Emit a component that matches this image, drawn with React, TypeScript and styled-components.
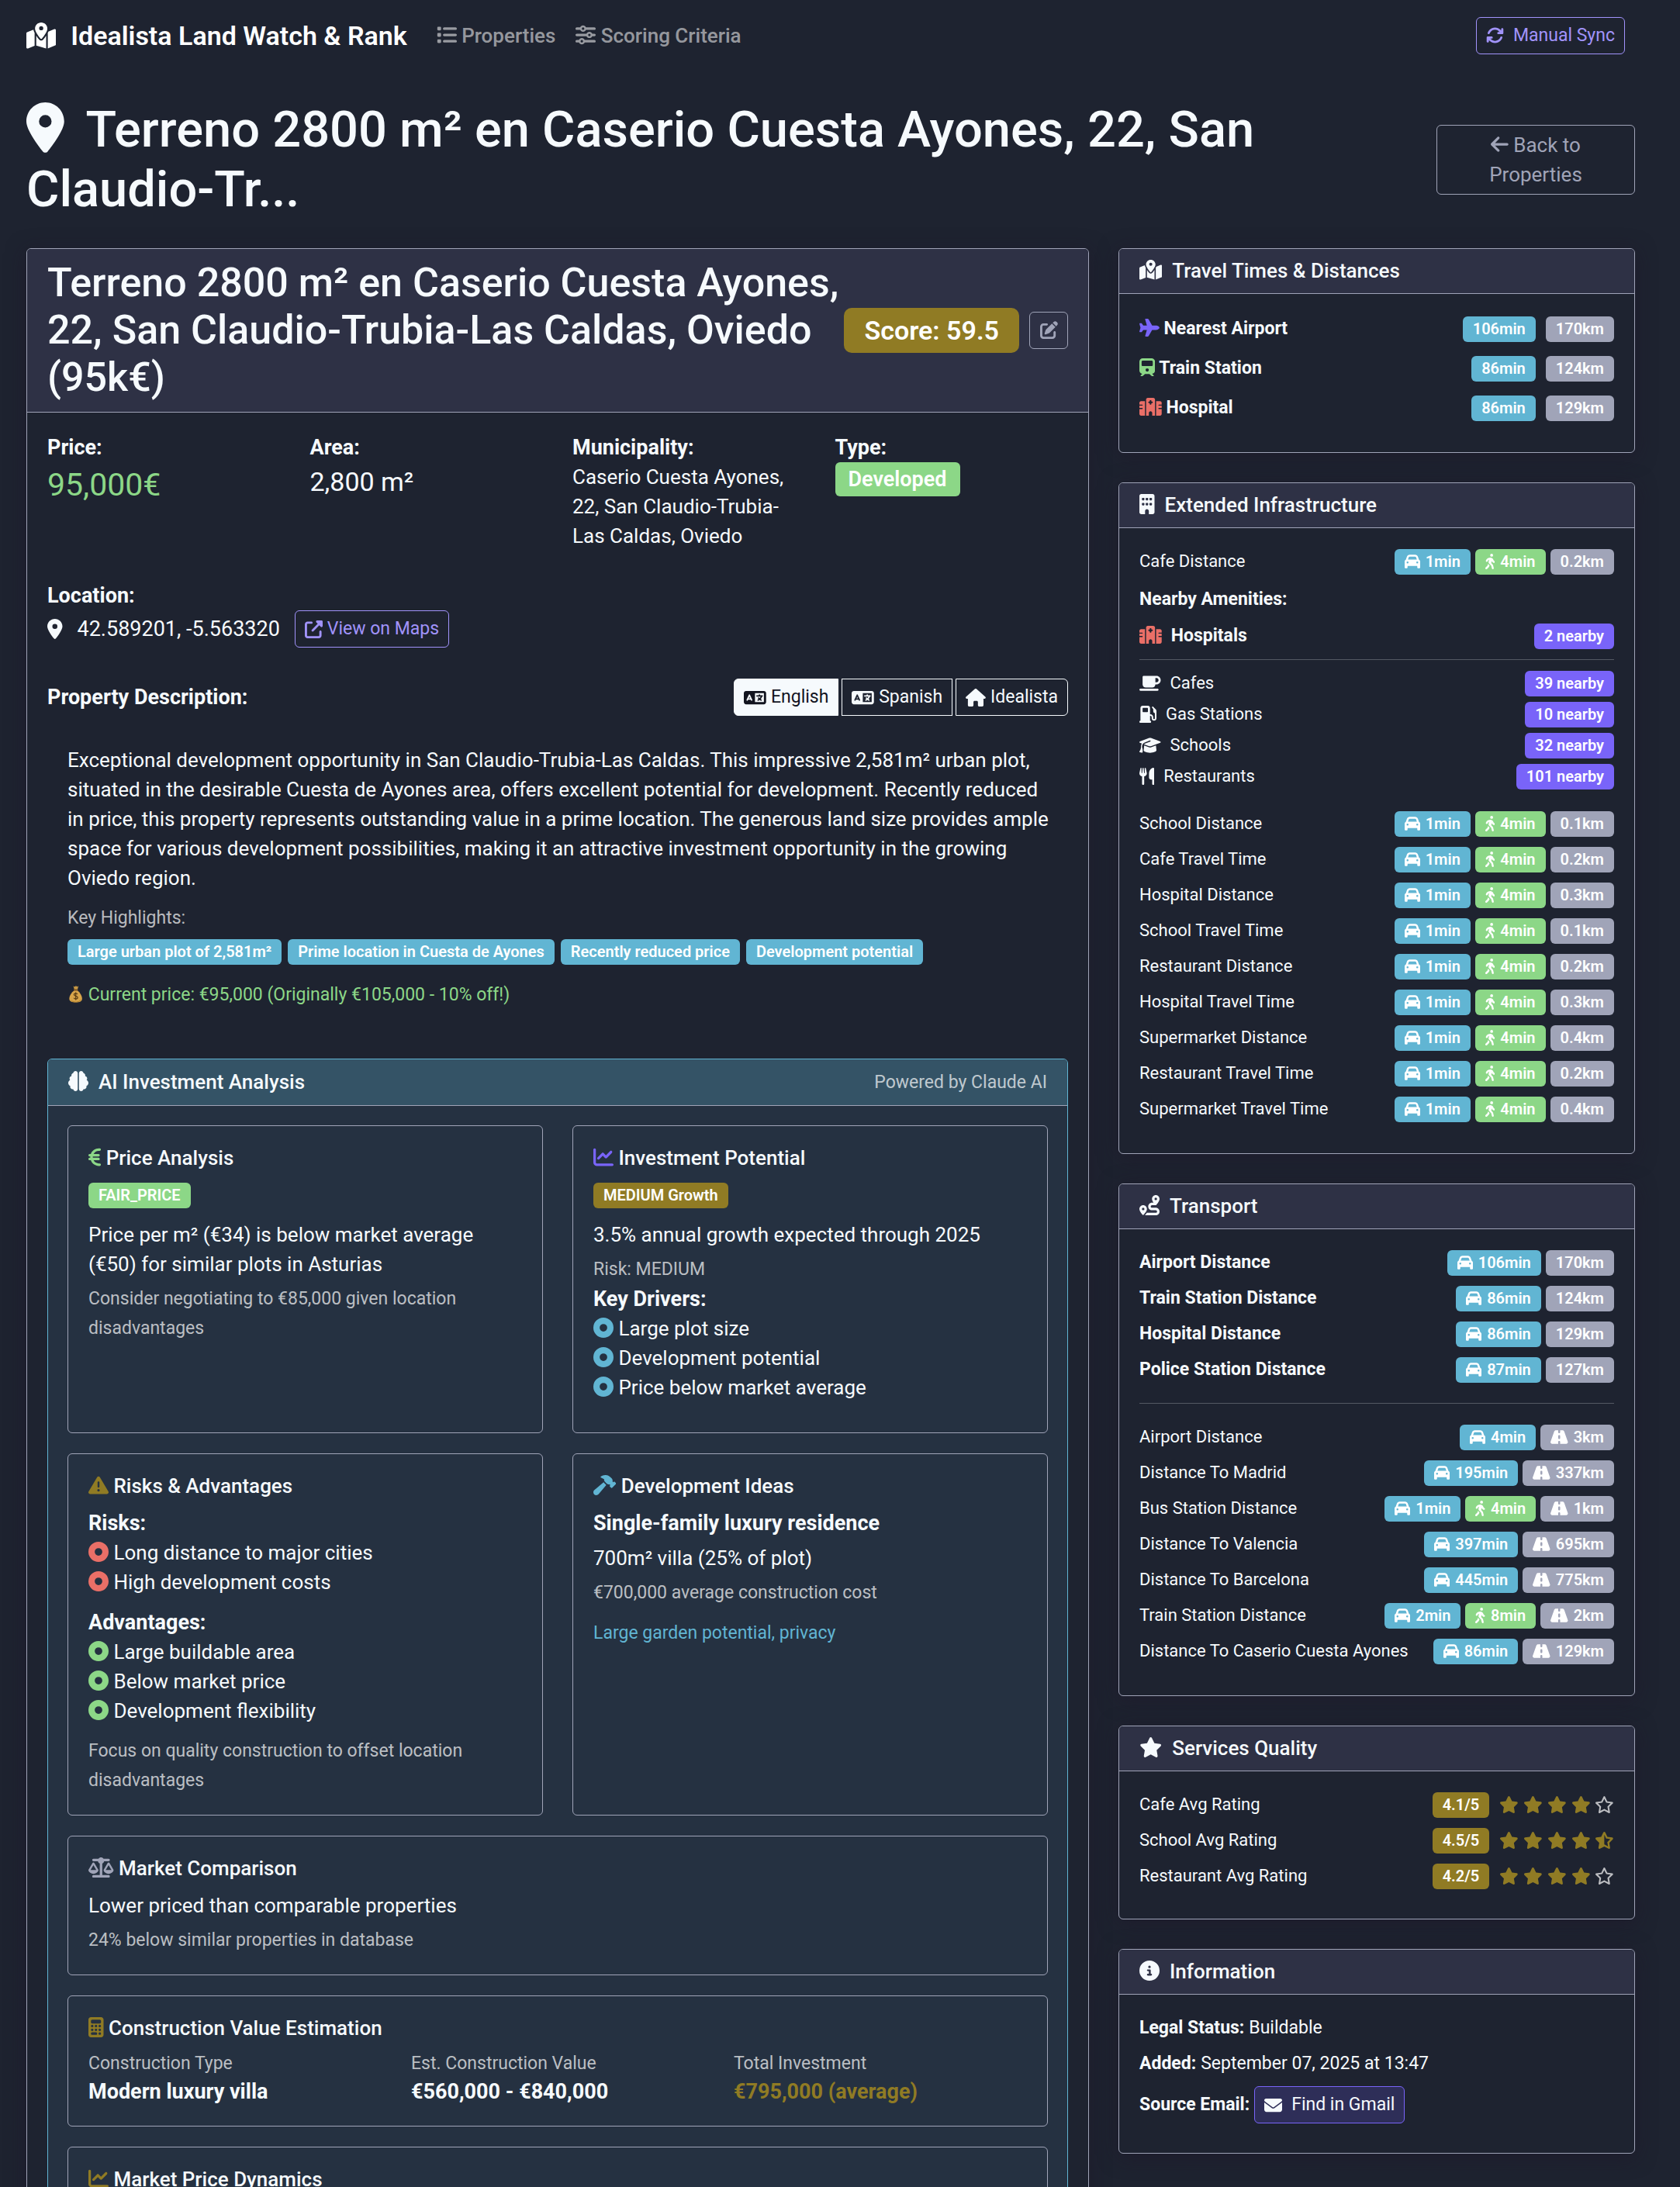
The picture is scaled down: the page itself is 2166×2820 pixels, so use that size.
import React from "react";
import styled, { createGlobalStyle, css } from "styled-components";
import type { IconType } from "react-icons";
import {
  FaArrowLeft,
  FaArrowsRotate,
  FaBrain,
  FaBuilding,
  FaCalculator,
  FaCar,
  FaChartLine,
  FaCircleDot,
  FaCircleInfo,
  FaEnvelope,
  FaEuroSign,
  FaGasPump,
  FaGraduationCap,
  FaHammer,
  FaHospital,
  FaHouse,
  FaLanguage,
  FaList,
  FaLocationDot,
  FaMapLocationDot,
  FaMugSaucer,
  FaPenToSquare,
  FaPersonWalking,
  FaPlane,
  FaRegStar,
  FaRoad,
  FaRoute,
  FaScaleBalanced,
  FaSliders,
  FaStar,
  FaStarHalfStroke,
  FaTrain,
  FaTriangleExclamation,
  FaUpRightFromSquare,
  FaUtensils,
} from "react-icons/fa6";

const color = {
  page: "#1e2330",
  header: "#2e3145",
  line: "#a0a4b8",
  text: "#f6fafd",
  muted: "rgba(255, 255, 255, 0.7)",
  info: "#61b5d3",
  green: "#8cd787",
  grey: "#a0a4b8",
  purple: "#7964f9",
  lilac: "#a193fb",
  gold: "#907b24",
  red: "#ea6f67",
};

const GlobalStyle = createGlobalStyle`
  *, *::before, *::after { box-sizing: border-box; }
  body {
    margin: 0;
    background: ${color.page};
    color: ${color.text};
    font-family: Roboto, "Liberation Sans", sans-serif;
    font-size: 26px;
    line-height: 38px;
  }
  h1, h2, h3, h4, p, ul, dl, dd, dt { margin: 0; padding: 0; }
  ul { list-style: none; }
  svg { height: 1em; vertical-align: -0.125em; flex: none; }
`;

/* Draws a Font Awesome glyph one em high and as wide as its own view box asks. */
const Icon = ({ glyph: Glyph, empty }: { glyph: IconType; empty?: boolean }) => {
  const element = Glyph({}) as React.ReactElement<{ attr?: { viewBox?: string } }>;
  const box = (element.props.attr?.viewBox ?? "0 0 512 512").split(" ").map(Number);
  return <Glyph style={{ width: `${box[2] / box[3]}em` }} data-empty={empty ? "" : undefined} />;
};

const Viewport = styled.div`
  height: 100vh;
  overflow-y: auto;
  scrollbar-width: none;
`;

const Page = styled.div`
  padding: 0 58px 38px 34px;
`;

/* ---------- navigation ---------- */

const Navbar = styled.nav`
  display: flex;
  align-items: center;
  height: 91px;
  padding-right: 13px;
`;

const Brand = styled.a`
  display: flex;
  align-items: center;
  gap: 19px;
  margin-right: 38px;
  color: #fff;
  font-size: 34px;
  font-weight: 600;
  text-decoration: none;
`;

const NavLinks = styled.div`
  display: flex;
  flex: 1;
  gap: 26px;
`;

const NavLink = styled.a`
  color: rgba(255, 255, 255, 0.55);
  font-weight: 500;
  text-decoration: none;
`;

const buttonBase = css`
  display: inline-flex;
  align-items: center;
  justify-content: center;
  height: 48px;
  padding: 0 12px;
  border: 1px solid currentColor;
  border-radius: 6px;
  background: transparent;
  font: inherit;
  font-size: 23px;
  text-decoration: none;
  white-space: nowrap;
`;

const SyncButton = styled.button`
  ${buttonBase}
  gap: 12px;
  color: ${color.lilac};
`;

/* ---------- title row ---------- */

const TitleRow = styled.header`
  display: flex;
  align-items: center;
  justify-content: space-between;
  gap: 38px;
  padding: 38px 0 37px;
`;

const PageTitle = styled.h1`
  flex: 1;
  font-size: 65px;
  font-weight: 500;
  line-height: 77px;

  svg { margin-right: 13px; }
`;

const BackLink = styled.a`
  width: 256px;
  padding: 6px 38px;
  border: 1px solid ${color.line};
  border-radius: 6px;
  color: ${color.grey};
  text-align: center;
  text-decoration: none;
`;

/* ---------- cards ---------- */

const Columns = styled.main`
  display: grid;
  grid-template-columns: repeat(12, minmax(0, 1fr));
  gap: 38px;
  align-items: start;
`;

const MainColumn = styled.div`
  grid-column: span 8;
`;

const SideColumn = styled.div`
  grid-column: span 4;
  display: flex;
  flex-direction: column;
  gap: 38px;
`;

const Card = styled.section`
  border: 1px solid ${color.line};
  border-radius: 6px;
  box-shadow: 0 4px 26px rgba(30, 20, 40, 0.5);
  overflow: hidden;
`;

const CardHeader = styled.div`
  display: flex;
  align-items: center;
  padding: 13px 26px;
  border-bottom: 1px solid ${color.line};
  background: ${color.header};
`;

const PropertyHeader = styled(CardHeader)`
  gap: 6px;
  padding: 13px 26px 14px;
`;

const HeaderActions = styled.div`
  display: flex;
  align-items: center;
  gap: 13px;
`;

const CardTitle = styled.h3`
  font-size: 26px;
  font-weight: 500;
  line-height: 31px;

  svg { margin-right: 13px; }
`;

const CardBody = styled.div<{ $end?: number }>`
  padding: 26px 26px ${(p) => p.$end ?? 38}px;
`;

const PropertyTitle = styled.h2`
  flex: 1;
  font-size: 52px;
  font-weight: 500;
  line-height: 61px;
`;

const ScoreBadge = styled.span`
  padding: 10px 26px;
  border-radius: 10px;
  background: ${color.gold};
  color: #fff;
  font-size: 34px;
  font-weight: 600;
  white-space: nowrap;
`;

const EditButton = styled.button`
  ${buttonBase}
  width: 50px;
  padding: 0;
  color: ${color.grey};
`;

type Tone = "info" | "green" | "grey" | "purple" | "gold";

const Badge = styled.span<{ $tone: Tone }>`
  display: inline-flex;
  align-items: center;
  gap: 7px;
  height: 33px;
  padding: 0 13px;
  border-radius: 6px;
  background: ${(p) => color[p.$tone]};
  color: #fff;
  font-size: 20px;
  font-weight: 600;
  line-height: 33px;
  white-space: nowrap;
`;

const TypeBadge = styled.span`
  align-self: flex-start;
  padding: 3px 17px;
  border-radius: 6px;
  background: ${color.green};
  color: #fff;
  font-size: 27px;
  font-weight: 600;
`;

/* ---------- property facts ---------- */

const Facts = styled.dl`
  display: grid;
  grid-template-columns: repeat(4, minmax(0, 1fr));
  gap: 38px;
`;

const Fact = styled.div`
  display: flex;
  flex-direction: column;
`;

const Label = styled.dt`
  font-size: 27px;
  font-weight: 700;
`;

const Price = styled.dd`
  color: ${color.green};
  font-size: 41px;
  line-height: 58px;
`;

const Area = styled.dd`
  font-size: 34px;
  line-height: 50px;
`;

const Location = styled.div`
  margin-top: 39px;
`;

const LocationLine = styled.div`
  display: flex;
  align-items: center;
  gap: 19px;
  height: 48px;
`;

const Coordinates = styled.span`
  font-size: 27px;
`;

const MapsLink = styled.a`
  ${buttonBase}
  gap: 6px;
  color: ${color.lilac};
`;

const DescriptionBar = styled.div`
  display: flex;
  align-items: center;
  justify-content: space-between;
  margin-top: 40px;
`;

const Strong = styled.strong`
  display: block;
  font-size: 27px;
  font-weight: 700;
`;

const ButtonGroup = styled.div`
  display: flex;
  gap: 4px;
`;

const LangButton = styled.button<{ $active?: boolean }>`
  ${buttonBase}
  gap: 6px;
  border-color: ${color.text};
  border-radius: 0;
  background: ${(p) => (p.$active ? color.text : "transparent")};
  color: ${(p) => (p.$active ? "#12141f" : color.text)};

  &:first-child { border-radius: 6px 0 0 6px; }
  &:last-child { border-radius: 0 6px 6px 0; }
`;

const Description = styled.div`
  padding: 38px 13px 0 26px;
`;

const Small = styled.p<{ $tone?: "green" | "info" }>`
  color: ${(p) => (p.$tone ? color[p.$tone] : color.muted)};
  font-size: 23px;
`;

const BadgeRow = styled.div<{ $gap?: number }>`
  display: flex;
  align-items: center;
  gap: ${(p) => p.$gap ?? 6}px;
`;

const Highlights = styled.div`
  padding-top: 14px;
`;

const HighlightBadges = styled(BadgeRow)`
  margin: 8px 0 20px;
`;

/* ---------- AI analysis ---------- */

const AiCard = styled.section`
  margin-top: 63px;
  border: 1px solid ${color.info};
  border-radius: 6px;
  background: #253141;
  overflow: hidden;
`;

const AiHeader = styled(CardHeader)`
  justify-content: space-between;
  height: 60px;
  background: #345366;
`;

const AiGrid = styled.div`
  display: grid;
  grid-template-columns: repeat(2, minmax(0, 1fr));
  gap: 26px 38px;
  padding: 25px;
`;

const Panel = styled.article<{ $wide?: boolean }>`
  grid-column: ${(p) => (p.$wide ? "1 / -1" : "auto")};
  padding: 26px 26px 25px;
  border: 1px solid ${color.line};
  border-radius: 6px;
`;

const PanelTitle = styled.h4`
  margin-bottom: 13px;
  font-size: 26px;
  font-weight: 500;
  line-height: 31px;
`;

const Stack = styled.div<{ $gap?: number; $end?: number }>`
  display: flex;
  flex-direction: column;
  gap: ${(p) => p.$gap ?? 7}px;
  padding-bottom: ${(p) => p.$end ?? 0}px;
`;

const BadgeLine = styled.div`
  display: flex;
  align-items: center;
  height: 38px;
  margin-bottom: 6px;
`;

const Tint = styled.span<{ $tone: keyof typeof color }>`
  color: ${(p) => color[p.$tone]};
`;

const Values = styled.dl`
  display: grid;
  grid-template-columns: repeat(3, minmax(0, 1fr));
  gap: 38px;
`;

const ValueLabel = styled.dt`
  color: ${color.muted};
  font-size: 23px;
  line-height: 34px;
`;

const Value = styled.dd<{ $gold?: boolean }>`
  color: ${(p) => (p.$gold ? color.gold : color.text)};
  font-size: 27px;
  font-weight: 700;
`;

/* ---------- sidebar rows ---------- */

const Rows = styled.ul<{ $gap?: number }>`
  display: flex;
  flex-direction: column;
  gap: ${(p) => p.$gap ?? 12}px;
`;

const Row = styled.li<{ $bold?: boolean; $tall?: boolean }>`
  display: flex;
  align-items: center;
  justify-content: space-between;
  height: ${(p) => (p.$tall ? 38 : 34)}px;
  font-size: ${(p) => (p.$bold ? 23 : 22)}px;
  font-weight: ${(p) => (p.$bold ? 700 : 400)};
`;

const AmenityName = styled.span`
  display: flex;
  align-items: center;
  gap: 12px;
`;

const Divider = styled.hr<{ $space: number }>`
  height: 1px;
  margin: ${(p) => p.$space}px 0;
  border: 0;
  background: rgba(246, 250, 253, 0.25);
`;

const Amenities = styled.div`
  padding: 13px 0 27px;
`;

const AmenitiesTitle = styled.h4`
  margin-bottom: 11px;
  font-size: 23px;
  font-weight: 700;
  line-height: 38px;
`;

const Rating = styled.div`
  display: flex;
  align-items: center;
  gap: 13px;
`;

const Stars = styled.span`
  display: flex;
  gap: 6px;
  color: ${color.gold};

  svg[data-empty] { color: ${color.muted}; }
`;

const InfoLine = styled.p`
  display: flex;
  align-items: center;
  gap: 6px;
  font-size: 23px;
  line-height: 34px;
`;

const GmailLink = styled.a`
  ${buttonBase}
  gap: 12px;
  border-color: ${color.purple};
  background: #2e2e58;
  color: ${color.text};
`;

const MoneyBag = () => (
  <svg viewBox="0 0 20 24" width="21" aria-label="money bag" role="img">
    <path d="M7 1.5 9 2.5 10.5 1l1.5 1.5L13.8 1.4 12.6 6H8.2z" fill="#c99a45" />
    <path d="M8 7.5C4.5 10 1.5 14.5 1.5 18.5c0 3.6 3.5 5 8.7 5s8.5-1.4 8.5-5c0-4-3-8.5-6.2-11z" fill="#d8a54a" />
    <path d="M4 20c1.2 2 4 2.6 6.2 2.6S16 22 17 19c.4 3-3 4.200-6.800 4.200S4.500 22.500 4 20z" fill="#a87626" />
    <path d="M7.500 5.800h5.400v1.900H7.500z" fill="#8b5d22" />
    <path d="M12.600 12.600c-.5-1-1.400-1.300-2.400-1.300-1.300 0-2.300.7-2.300 1.800 0 2.600 4.900 1.300 4.900 3.900 0 1.200-1.100 1.900-2.500 1.900-1.300 0-2.200-.5-2.600-1.500M10.200 9.800v10.600" fill="none" stroke="#5a3c14" strokeWidth="1.300" />
  </svg>
);

/* ---------- data ---------- */

type Trip = { name: string; drive: string; walk?: string; km: string };

const nearby: Trip[] = [
  ["School Distance", "0.1km"],
  ["Cafe Travel Time", "0.2km"],
  ["Hospital Distance", "0.3km"],
  ["School Travel Time", "0.1km"],
  ["Restaurant Distance", "0.2km"],
  ["Hospital Travel Time", "0.3km"],
  ["Supermarket Distance", "0.4km"],
  ["Restaurant Travel Time", "0.2km"],
  ["Supermarket Travel Time", "0.4km"],
].map(([name, km]) => ({ name, drive: "1min", walk: "4min", km }));

const mainTransport: Trip[] = [
  { name: "Airport Distance", drive: "106min", km: "170km" },
  { name: "Train Station Distance", drive: "86min", km: "124km" },
  { name: "Hospital Distance", drive: "86min", km: "129km" },
  { name: "Police Station Distance", drive: "87min", km: "127km" },
];

const otherTransport: Trip[] = [
  { name: "Airport Distance", drive: "4min", km: "3km" },
  { name: "Distance To Madrid", drive: "195min", km: "337km" },
  { name: "Bus Station Distance", drive: "1min", walk: "4min", km: "1km" },
  { name: "Distance To Valencia", drive: "397min", km: "695km" },
  { name: "Distance To Barcelona", drive: "445min", km: "775km" },
  { name: "Train Station Distance", drive: "2min", walk: "8min", km: "2km" },
  { name: "Distance To Caserio Cuesta Ayones", drive: "86min", km: "129km" },
];

const amenities = [
  { glyph: FaMugSaucer, name: "Cafes", count: 39 },
  { glyph: FaGasPump, name: "Gas Stations", count: 10 },
  { glyph: FaGraduationCap, name: "Schools", count: 32 },
  { glyph: FaUtensils, name: "Restaurants", count: 101 },
];

const travel = [
  { tone: "purple", glyph: FaPlane, name: "Nearest Airport", time: "106min", km: "170km" },
  { tone: "green", glyph: FaTrain, name: "Train Station", time: "86min", km: "124km" },
  { tone: "red", glyph: FaHospital, name: "Hospital", time: "86min", km: "129km" },
] as const;

const ratings = [
  { name: "Cafe Avg Rating", score: 4.1 },
  { name: "School Avg Rating", score: 4.5 },
  { name: "Restaurant Avg Rating", score: 4.2 },
];

const TripRow = ({ trip, bold, road }: { trip: Trip; bold?: boolean; road?: boolean }) => (
  <Row $bold={bold}>
    <span>{trip.name}</span>
    <BadgeRow>
      <Badge $tone="info"><Icon glyph={FaCar} /> {trip.drive}</Badge>
      {trip.walk && <Badge $tone="green"><Icon glyph={FaPersonWalking} /> {trip.walk}</Badge>}
      <Badge $tone="grey">{road && <Icon glyph={FaRoad} />} {trip.km}</Badge>
    </BadgeRow>
  </Row>
);

const StarScore = ({ score }: { score: number }) => (
  <Stars>
    {[1, 2, 3, 4, 5].map((n) => {
      const glyph = score >= n ? FaStar : score >= n - 0.5 ? FaStarHalfStroke : FaRegStar;
      return <Icon key={n} glyph={glyph} empty={glyph === FaRegStar} />;
    })}
  </Stars>
);

const Bullets = ({ tone, items }: { tone: "info" | "red" | "green"; items: string[] }) => (
  <ul>
    {items.map((item) => (
      <li key={item}><Tint $tone={tone}><Icon glyph={FaCircleDot} /></Tint> {item}</li>
    ))}
  </ul>
);

const AiAnalysis = () => (
  <AiCard>
    <AiHeader>
      <CardTitle><Icon glyph={FaBrain} />AI Investment Analysis</CardTitle>
      <Small>Powered by Claude AI</Small>
    </AiHeader>
    <AiGrid>
      <Panel>
        <PanelTitle><Tint $tone="green"><Icon glyph={FaEuroSign} /></Tint> Price Analysis</PanelTitle>
        <Stack>
          <BadgeLine><Badge $tone="green">FAIR_PRICE</Badge></BadgeLine>
          <p>Price per m² (€34) is below market average (€50) for similar plots in Asturias</p>
          <Small>Consider negotiating to €85,000 given location disadvantages</Small>
        </Stack>
      </Panel>
      <Panel>
        <PanelTitle><Tint $tone="purple"><Icon glyph={FaChartLine} /></Tint> Investment Potential</PanelTitle>
        <Stack $end={14}>
          <BadgeLine><Badge $tone="gold">MEDIUM Growth</Badge></BadgeLine>
          <p>3.5% annual growth expected through 2025</p>
          <div>
            <Small>Risk: MEDIUM</Small>
            <Strong>Key Drivers:</Strong>
            <Bullets tone="info" items={["Large plot size", "Development potential", "Price below market average"]} />
          </div>
        </Stack>
      </Panel>
      <Panel>
        <PanelTitle><Tint $tone="gold"><Icon glyph={FaTriangleExclamation} /></Tint> Risks &amp; Advantages</PanelTitle>
        <Stack $gap={14}>
          <div>
            <Strong>Risks:</Strong>
            <Bullets tone="red" items={["Long distance to major cities", "High development costs"]} />
          </div>
          <div>
            <Strong>Advantages:</Strong>
            <Bullets tone="green" items={["Large buildable area", "Below market price", "Development flexibility"]} />
          </div>
          <Small>Focus on quality construction to offset location disadvantages</Small>
        </Stack>
      </Panel>
      <Panel>
        <PanelTitle><Tint $tone="info"><Icon glyph={FaHammer} /></Tint> Development Ideas</PanelTitle>
        <Stack $gap={14}>
          <Stack>
            <Strong>Single-family luxury residence</Strong>
            <p>700m² villa (25% of plot)</p>
            <Small>€700,000 average construction cost</Small>
          </Stack>
          <Small $tone="info">Large garden potential, privacy</Small>
        </Stack>
      </Panel>
      <Panel $wide>
        <PanelTitle><Tint $tone="grey"><Icon glyph={FaScaleBalanced} /></Tint> Market Comparison</PanelTitle>
        <Stack>
          <p>Lower priced than comparable properties</p>
          <Small>24% below similar properties in database</Small>
        </Stack>
      </Panel>
      <Panel $wide>
        <PanelTitle><Tint $tone="gold"><Icon glyph={FaCalculator} /></Tint> Construction Value Estimation</PanelTitle>
        <Values>
          <div>
            <ValueLabel>Construction Type</ValueLabel>
            <Value>Modern luxury villa</Value>
          </div>
          <div>
            <ValueLabel>Est. Construction Value</ValueLabel>
            <Value>€560,000 - €840,000</Value>
          </div>
          <div>
            <ValueLabel>Total Investment</ValueLabel>
            <Value $gold>€795,000 (average)</Value>
          </div>
        </Values>
      </Panel>
      <Panel $wide>
        <PanelTitle><Tint $tone="gold"><Icon glyph={FaChartLine} /></Tint> Market Price Dynamics</PanelTitle>
      </Panel>
    </AiGrid>
  </AiCard>
);

export default function App() {
  return (
    <Viewport>
      <GlobalStyle />
      <Page>
        <Navbar>
          <Brand href="#"><Icon glyph={FaMapLocationDot} />Idealista Land Watch &amp; Rank</Brand>
          <NavLinks>
            <NavLink href="#properties"><Icon glyph={FaList} /> Properties</NavLink>
            <NavLink href="#criteria"><Icon glyph={FaSliders} /> Scoring Criteria</NavLink>
          </NavLinks>
          <SyncButton type="button"><Icon glyph={FaArrowsRotate} />Manual Sync</SyncButton>
        </Navbar>

        <TitleRow>
          <PageTitle><Icon glyph={FaLocationDot} /> Terreno 2800 m² en Caserio Cuesta Ayones, 22, San Claudio-Tr...</PageTitle>
          <BackLink href="#properties"><Icon glyph={FaArrowLeft} /> Back to Properties</BackLink>
        </TitleRow>

        <Columns>
          <MainColumn>
            <Card>
              <PropertyHeader>
                <PropertyTitle>Terreno 2800 m² en Caserio Cuesta Ayones, 22, San Claudio-Trubia-Las Caldas, Oviedo (95k€)</PropertyTitle>
                <HeaderActions>
                  <ScoreBadge>Score: 59.5</ScoreBadge>
                  <EditButton type="button" aria-label="Edit"><Icon glyph={FaPenToSquare} /></EditButton>
                </HeaderActions>
              </PropertyHeader>
              <CardBody>
                <Facts>
                  <Fact><Label>Price:</Label><Price>95,000€</Price></Fact>
                  <Fact><Label>Area:</Label><Area>2,800 m²</Area></Fact>
                  <Fact><Label>Municipality:</Label><dd>Caserio Cuesta Ayones, 22, San Claudio-Trubia-Las Caldas, Oviedo</dd></Fact>
                  <Fact><Label>Type:</Label><TypeBadge as="dd">Developed</TypeBadge></Fact>
                </Facts>

                <Location>
                  <Strong>Location:</Strong>
                  <LocationLine>
                    <Icon glyph={FaLocationDot} />
                    <Coordinates>42.589201, -5.563320</Coordinates>
                    <MapsLink href="#map"><Icon glyph={FaUpRightFromSquare} />View on Maps</MapsLink>
                  </LocationLine>
                </Location>

                <DescriptionBar>
                  <Strong>Property Description:</Strong>
                  <ButtonGroup>
                    <LangButton type="button" $active><Icon glyph={FaLanguage} />English</LangButton>
                    <LangButton type="button"><Icon glyph={FaLanguage} />Spanish</LangButton>
                    <LangButton type="button"><Icon glyph={FaHouse} />Idealista</LangButton>
                  </ButtonGroup>
                </DescriptionBar>

                <Description>
                  <p>
                    Exceptional development opportunity in San Claudio-Trubia-Las Caldas. This impressive 2,581m² urban plot,
                    situated in the desirable Cuesta de Ayones area, offers excellent potential for development. Recently
                    reduced in price, this property represents outstanding value in a prime location. The generous land size
                    provides ample space for various development possibilities, making it an attractive investment
                    opportunity in the growing Oviedo region.
                  </p>
                  <Highlights>
                    <Small>Key Highlights:</Small>
                    <HighlightBadges $gap={8}>
                      <Badge $tone="info">Large urban plot of 2,581m²</Badge>
                      <Badge $tone="info">Prime location in Cuesta de Ayones</Badge>
                      <Badge $tone="info">Recently reduced price</Badge>
                      <Badge $tone="info">Development potential</Badge>
                    </HighlightBadges>
                    <Small $tone="green"><MoneyBag /> Current price: €95,000 (Originally €105,000 - 10% off!)</Small>
                  </Highlights>
                </Description>

                <AiAnalysis />
              </CardBody>
            </Card>
          </MainColumn>

          <SideColumn>
            <Card>
              <CardHeader><CardTitle><Icon glyph={FaMapLocationDot} />Travel Times &amp; Distances</CardTitle></CardHeader>
              <CardBody>
                <Rows $gap={13}>
                  {travel.map((t) => (
                    <Row key={t.name} $bold $tall>
                      <span><Tint $tone={t.tone}><Icon glyph={t.glyph} /></Tint> {t.name}</span>
                      <BadgeRow $gap={13}>
                        <Badge $tone="info">{t.time}</Badge>
                        <Badge $tone="grey">{t.km}</Badge>
                      </BadgeRow>
                    </Row>
                  ))}
                </Rows>
              </CardBody>
            </Card>

            <Card>
              <CardHeader><CardTitle><Icon glyph={FaBuilding} />Extended Infrastructure</CardTitle></CardHeader>
              <CardBody $end={40}>
                <Rows><TripRow trip={{ name: "Cafe Distance", drive: "1min", walk: "4min", km: "0.2km" }} /></Rows>
                <Amenities>
                  <AmenitiesTitle>Nearby Amenities:</AmenitiesTitle>
                  <Rows>
                    <Row $bold>
                      <AmenityName><Tint $tone="red"><Icon glyph={FaHospital} /></Tint>Hospitals</AmenityName>
                      <Badge $tone="purple">2 nearby</Badge>
                    </Row>
                  </Rows>
                  <Divider $space={13} />
                  <Rows $gap={6}>
                    {amenities.map((a) => (
                      <Row key={a.name}>
                        <AmenityName><Icon glyph={a.glyph} />{a.name}</AmenityName>
                        <Badge $tone="purple">{a.count} nearby</Badge>
                      </Row>
                    ))}
                  </Rows>
                </Amenities>
                <Rows>
                  {nearby.map((trip) => <TripRow key={trip.name} trip={trip} />)}
                </Rows>
              </CardBody>
            </Card>

            <Card>
              <CardHeader><CardTitle><Icon glyph={FaRoute} />Transport</CardTitle></CardHeader>
              <CardBody $end={40}>
                <Rows>
                  {mainTransport.map((trip) => <TripRow key={trip.name} trip={trip} bold />)}
                </Rows>
                <Divider $space={26} />
                <Rows>
                  {otherTransport.map((trip) => <TripRow key={trip.name} trip={trip} road />)}
                </Rows>
              </CardBody>
            </Card>

            <Card>
              <CardHeader><CardTitle><Icon glyph={FaStar} />Services Quality</CardTitle></CardHeader>
              <CardBody>
                <Rows>
                  {ratings.map((r) => (
                    <Row key={r.name}>
                      <span>{r.name}</span>
                      <Rating>
                        <Badge $tone="gold">{r.score}/5</Badge>
                        <StarScore score={r.score} />
                      </Rating>
                    </Row>
                  ))}
                </Rows>
              </CardBody>
            </Card>

            <Card>
              <CardHeader><CardTitle><Icon glyph={FaCircleInfo} />Information</CardTitle></CardHeader>
              <CardBody>
                <Stack $gap={12}>
                  <InfoLine><b>Legal Status:</b> Buildable</InfoLine>
                  <InfoLine><b>Added:</b> September 07, 2025 at 13:47</InfoLine>
                  <InfoLine><b>Source Email:</b> <GmailLink href="#mail"><Icon glyph={FaEnvelope} />Find in Gmail</GmailLink></InfoLine>
                </Stack>
              </CardBody>
            </Card>
          </SideColumn>
        </Columns>
      </Page>
    </Viewport>
  );
}
